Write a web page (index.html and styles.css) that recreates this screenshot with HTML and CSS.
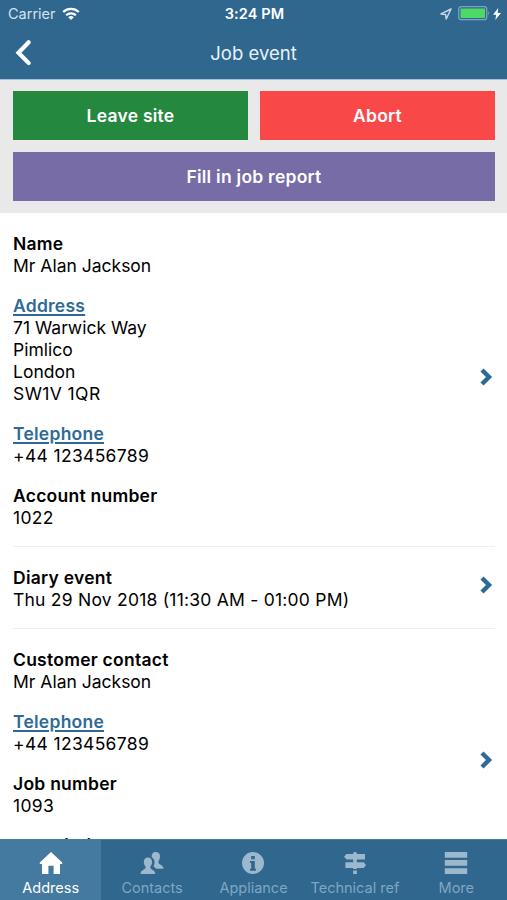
FILE: index.html
```html
<!DOCTYPE html>
<html lang="en">
<head>
<meta charset="utf-8">
<title>Job event</title>
<link rel="stylesheet" href="styles.css">
</head>
<body>
<div class="app">
  <header class="header">
    <div class="status">
      <div class="status-left">
        <span class="carrier">Carrier</span>
        <svg class="wifi" width="18" height="14" viewBox="0 0 18 14" fill="none" stroke="#fff" stroke-width="2.3"><path d="M1.2 5a11.2 11.2 0 0 1 15.600 0M4.100 8.300a7 7 0 0 1 9.800 0"/><path d="M9 13 6.200 10.300a4 4 0 0 1 5.600 0Z" fill="#fff" stroke="none"/></svg>
      </div>
      <span class="time">3:24 PM</span>
      <div class="status-right">
        <svg width="12" height="12" viewBox="0 0 12 12" fill="none" stroke="#c5d7e5" stroke-width="1.5" stroke-linejoin="round"><path d="M11 1 1 5.900l4.600.500.600 4.600Z"/></svg>
        <svg class="battery" width="33" height="15" viewBox="0 0 33 15"><rect x=".7" y=".7" width="28" height="13" rx="2.500" fill="none" stroke="#7fa3c0" stroke-width="1.300"/><rect x="2.500" y="2.500" width="24.500" height="9.500" rx=".8" fill="#4cd964"/><path d="M30.300 5q1.900 2.200 0 4.500Z" fill="#7fa3c0"/></svg>
        <svg width="8" height="12" viewBox="0 0 8 12" fill="#fff"><path d="M5.200 0 0 6.700h3.200L2.300 12 8 5H4.700Z"/></svg>
      </div>
    </div>
    <div class="nav">
      <svg class="back" width="20" height="30" viewBox="0 0 20 30" fill="none" stroke="#fff" stroke-width="4.200" stroke-linecap="round"><path d="M13.700 4.300 3.500 14.700l10.200 10.400"/></svg>
      <h1 class="title">Job event</h1>
      <span></span>
    </div>
  </header>
  <div class="actions">
    <button class="button green">Leave site</button>
    <button class="button red">Abort</button>
    <button class="button purple">Fill in job report</button>
  </div>
  <main class="content">
    <section class="row">
      <div class="fields">
        <div class="field"><h2>Name</h2><p>Mr Alan Jackson</p></div>
        <div class="field"><h2><a>Address</a></h2><p>71 Warwick Way<br>Pimlico<br>London<br><span class="code">SW1V 1QR</span></p></div>
        <div class="field"><h2><a>Telephone</a></h2><p class="number">+44 123456789</p></div>
        <div class="field"><h2>Account number</h2><p class="number">1022</p></div>
      </div>
      <svg class="chevron" width="13" height="18" viewBox="0 0 13 18"><path d="M2 2 9 9 2 16"/></svg>
    </section>
    <section class="row">
      <div class="fields">
        <div class="field"><h2>Diary event</h2><p class="date">Thu 29 Nov 2018 (11:30 AM - 01:00 PM)</p></div>
      </div>
      <svg class="chevron" width="13" height="18" viewBox="0 0 13 18"><path d="M2 2 9 9 2 16"/></svg>
    </section>
    <section class="row">
      <div class="fields">
        <div class="field"><h2>Customer contact</h2><p>Mr Alan Jackson</p></div>
        <div class="field"><h2><a>Telephone</a></h2><p class="number">+44 123456789</p></div>
        <div class="field"><h2>Job number</h2><p class="number">1093</p></div>
        <div class="field two-line"><h2>Description</h2></div>
      </div>
      <svg class="chevron" width="13" height="18" viewBox="0 0 13 18"><path d="M2 2 9 9 2 16"/></svg>
    </section>
  </main>
  <nav class="tabs">
    <a class="tab active"><svg width="24" height="24" viewBox="0 0 24 24"><path d="M12 1 .8 11.600V13H3v10h6.400v-8.300h5.200V23H21V13h2.200v-1.400Z"/></svg><span>Address</span></a>
    <a class="tab"><svg width="24" height="24" viewBox="0 0 24 24"><path d="M11.800 6.200C11.400 3 13 1 15.800 1s4.400 2 4.200 4.800c-.1 2-.9 3.200-1.500 4.200v2c.4 1.700 5 2 5 5.700h-7.300c-.7-1-1.800-1.700-2.700-2.200.6-1.300 1-2.700 1-4.500 0-2-.9-3.700-2.700-4.800Z"/><path d="M.5 23c0-4 4.600-4.300 5-6v-1.700C4.400 14.200 3.800 13 3.800 11c0-2.700 1.500-4.500 4.100-4.500s4.200 1.800 4.200 4.500c0 2-.8 3.200-1.700 4.300V17c.3 1.700 4.900 2 4.900 6Z"/></svg><span>Contacts</span></a>
    <a class="tab"><svg width="24" height="24" viewBox="0 0 24 24"><path fill-rule="evenodd" d="M12 1a11 11 0 1 1 0 22 11 11 0 0 1 0-22ZM10.200 5v3.200h3.600V5ZM9 10v2h1.200v5.800H9v1.900h6v-1.900h-1.200V10Z"/></svg><span>Appliance</span></a>
    <a class="tab"><svg width="24" height="24" viewBox="0 0 24 24"><path d="M10.200 3V1.500q1.800-1 3.600 0V3H22v5.500h-8.200v2.700h6.900l2.300 2.900-2.300 2.900h-6.900v1h-3.600v-1H2.400v-5.800h7.800V8.500H3.500L1 5.700 3.500 3ZM10.200 19.500h3.600V23h-3.600Z"/></svg><span>Technical ref</span></a>
    <a class="tab"><svg width="24" height="24" viewBox="0 0 24 24"><path d="M.8 1h22.400v5.800H.8ZM.8 9h22.400v5.800H.8ZM.8 17.200h22.400V23H.8Z"/></svg><span>More</span></a>
  </nav>
</div>
</body>
</html>
```
FILE: styles.css
```css
* { box-sizing: border-box; }
body, h1, h2, p { margin: 0; }
body { font-family: Inter, "Liberation Sans", sans-serif; color: #000; background: #fff; }
.app { height: 900px; display: flex; flex-direction: column; overflow: hidden; }
.header { flex: none; height: 80px; background: #2f678f; color: #fff; border-bottom: 1px solid #9fc3df; }
.status { height: 27px; display: grid; grid-template-columns: 1fr auto 1fr; align-items: center; padding: 0 6px 0 8px; }
.status-left, .status-right { display: flex; align-items: center; }
.carrier { font-size: 14.5px; color: #d5e2ec; }
.wifi { margin-left: 6px; }
.time { font-size: 14.5px; font-weight: 600; letter-spacing: .15px; }
.status-right { justify-content: flex-end; }
.battery { margin: 0 2px 0 6px; }
.nav { height: 52px; display: grid; grid-template-columns: 1fr auto 1fr; align-items: center; padding: 0 15px; }
.title { font-size: 18.500px; font-weight: 400; line-height: 22px; color: #e9f1f7; }
.actions { flex: none; height: 133px; background: #e9e9e9; padding: 11px 12px 12px 13px; display: grid; grid-template-columns: 1fr 1fr; grid-template-rows: 49px 49px; gap: 12px; }
.button { border: 0; border-radius: 0; color: #fff; font: 600 17.5px Inter, sans-serif; letter-spacing: .25px; }
.green { background: #25883f; }
.red { background: #f84848; }
.purple { background: #776ca5; grid-column: 1 / -1; }
.content { flex: 1; min-height: 0; overflow: hidden; padding: 0 12px 0 13px; }
.row { display: flex; justify-content: space-between; align-items: center; padding: 20px 0 17px; border-bottom: 1px solid #efefef; }
.fields { display: flex; flex-direction: column; gap: 18px; }
.field { font-size: 17.5px; line-height: 22px; }
.two-line { min-height: 44px; }
.field h2 { font-size: inherit; font-weight: 600; letter-spacing: .25px; }
.number { letter-spacing: .33px; }
.date { letter-spacing: .23px; }
.code { letter-spacing: .4px; }
.field a { color: #2f6a96; text-decoration: underline; text-decoration-thickness: 1.5px; text-underline-offset: 2px; }
.chevron { fill: none; stroke: #2f6a96; stroke-width: 4.4; margin: 0 2px 9px 0; }
.tabs { flex: none; height: 61px; background: #2f678f; border-top: 1px solid #497ca0; display: grid; grid-template-columns: repeat(5, 1fr); }
.tab { display: flex; flex-direction: column; align-items: center; padding-top: 11px; gap: 4px; color: #81a6c1; fill: #9cb8cd; font-size: 14.5px; line-height: 18px; white-space: nowrap; }
.active { background: #447a9f; color: #fff; fill: #fff; }
```
